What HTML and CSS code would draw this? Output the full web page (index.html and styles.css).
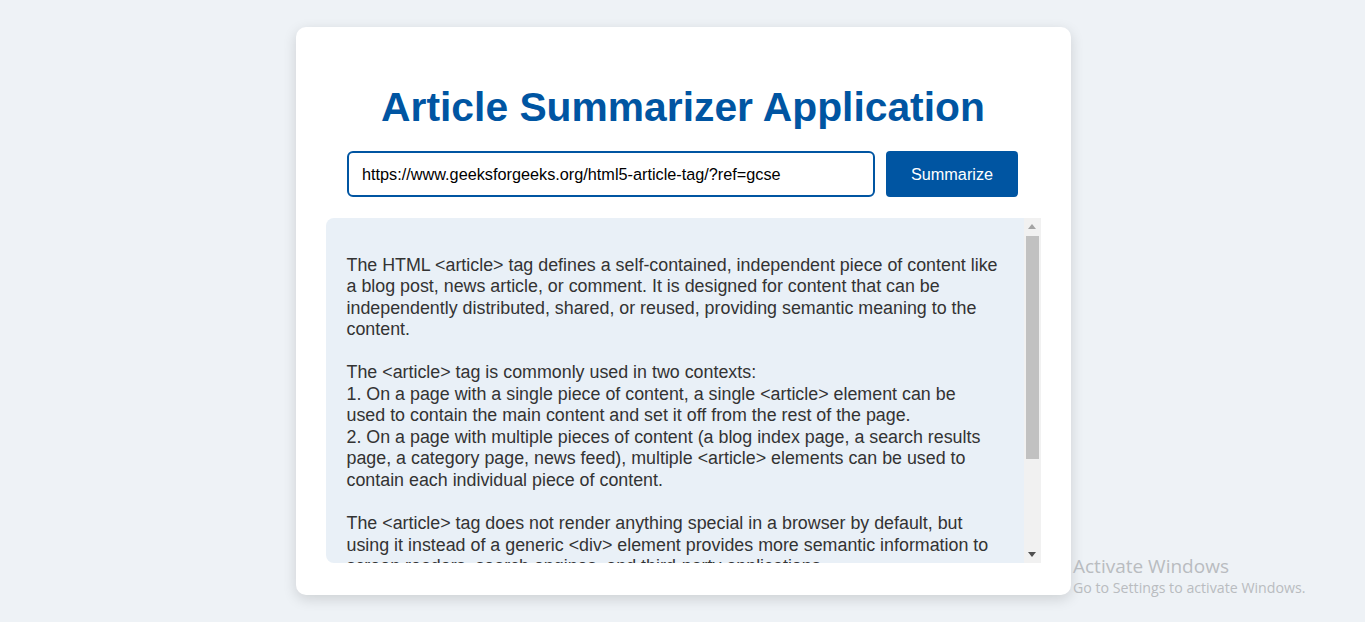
FILE: index.html
```html
<!DOCTYPE html>
<html lang="en">
<head>
<meta charset="utf-8">
<title>Article Summarizer Application</title>
<link rel="stylesheet" href="styles.css">
</head>
<body>
<main class="card">
  <h1 class="title">Article Summarizer Application</h1>
  <form class="form" onsubmit="return false">
    <input class="url-input" type="text" value="https://www.geeksforgeeks.org/html5-article-tag/?ref=gcse">
    <button class="btn" type="submit">Summarize</button>
  </form>
  <div class="summary-box">
    <div class="summary">
The HTML &lt;article&gt; tag defines a self-contained, independent piece of content like
a blog post, news article, or comment. It is designed for content that can be
independently distributed, shared, or reused, providing semantic meaning to the
content.

The &lt;article&gt; tag is commonly used in two contexts:
1. On a page with a single piece of content, a single &lt;article&gt; element can be
used to contain the main content and set it off from the rest of the page.
2. On a page with multiple pieces of content (a blog index page, a search results
page, a category page, news feed), multiple &lt;article&gt; elements can be used to
contain each individual piece of content.

The &lt;article&gt; tag does not render anything special in a browser by default, but
using it instead of a generic &lt;div&gt; element provides more semantic information to
screen readers, search engines, and third-party applications.

In summary, the &lt;article&gt; tag helps structure web pages so that each standalone
piece of content is clearly identified and easier to understand and reuse.
</div>
    <div class="scrollbar" aria-hidden="true">
      <div class="sb-btn">
        <svg width="8" height="5" viewBox="0 0 8 5"><polygon points="0,5 8,5 4,0" fill="#a3a3a3"/></svg>
      </div>
      <div class="sb-track">
        <div class="sb-thumb"></div>
      </div>
      <div class="sb-btn">
        <svg width="8" height="5" viewBox="0 0 8 5"><polygon points="0,0 8,0 4,5" fill="#505050"/></svg>
      </div>
    </div>
  </div>
</main>
<div class="watermark">
  <div class="wm-title">Activate Windows</div>
  <div class="wm-sub">Go to Settings to activate Windows.</div>
</div>
</body>
</html>
```
FILE: styles.css
```css
* { box-sizing: border-box; }

html, body { height: 100%; }

body {
  margin: 0;
  background: #eef2f6;
  font-family: "Liberation Sans", Arial, sans-serif;
  display: flex;
  align-items: center;
  justify-content: center;
}

.card {
  width: 775px;
  margin-left: 1px;
  background: #ffffff;
  border-radius: 10px;
  padding: 30px 30px 32px;
  box-shadow: 0 4px 14px rgba(0, 0, 0, 0.14);
}

.title {
  margin: 27px 0 20px;
  text-align: center;
  font-size: 40.8px;
  line-height: 47px;
  font-weight: bold;
  color: #0055a2;
}

.form {
  display: flex;
  justify-content: center;
  gap: 11px;
  margin: 0 0 21px;
  padding-right: 1px;
}

.url-input {
  width: 528px;
  height: 46px;
  border: 2px solid #0055a2;
  border-radius: 6px;
  padding: 0 13px;
  font-family: "Liberation Sans", Arial, sans-serif;
  font-size: 16.25px;
  color: #000;
  background: #fff;
  outline: none;
}

.btn {
  width: 132px;
  height: 46px;
  border: none;
  border-radius: 4px;
  background: #0055a2;
  color: #fff;
  font-family: "Liberation Sans", Arial, sans-serif;
  font-size: 16.25px;
  cursor: pointer;
}

.summary-box {
  display: flex;
  height: 345px;
}

.summary {
  flex: 1;
  overflow: hidden;
  background: #e9f0f7;
  border-radius: 8px 0 0 8px;
  padding: 15px 20px 15px 21px;
  white-space: pre-wrap;
  font-size: 17.85px;
  line-height: 21.55px;
  color: #333333;
}

.scrollbar {
  width: 17px;
  flex: none;
  display: flex;
  flex-direction: column;
  background: #f1f1f1;
}

.sb-btn {
  height: 17px;
  flex: none;
  display: flex;
  align-items: center;
  justify-content: center;
}

.sb-track {
  flex: 1;
  padding: 1px 2px 0;
}

.sb-thumb {
  height: 223px;
  background: #c1c1c1;
}

.watermark {
  position: absolute;
  left: 1073px;
  top: 554px;
  font-family: "Open Sans", "Noto Sans", sans-serif;
  color: #b9bcc0;
  pointer-events: none;
}

.wm-title {
  font-size: 19px;
  line-height: 24px;
}

.wm-sub {
  font-size: 14.2px;
  line-height: 20px;
}
```
